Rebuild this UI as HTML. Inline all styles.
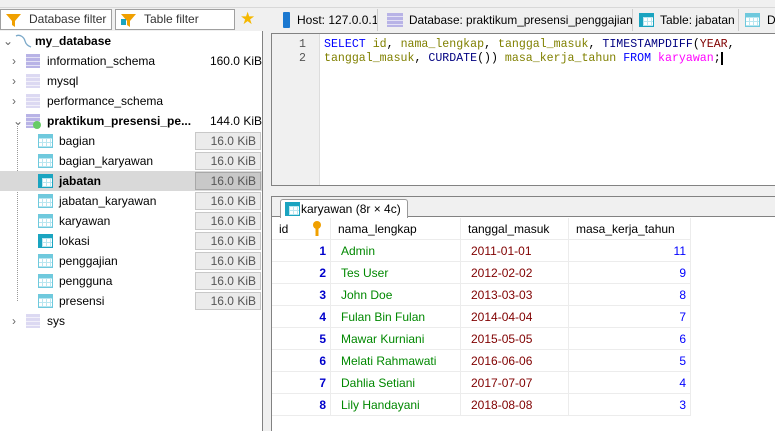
<!DOCTYPE html>
<html><head><meta charset="utf-8"><style>
*{margin:0;padding:0;box-sizing:border-box}
body{width:775px;height:431px;overflow:hidden;background:#f0f0f0;font-family:"Liberation Sans","DejaVu Sans",sans-serif;font-size:12px;color:#000;position:relative}
.abs{position:absolute}
.tb{left:0;top:0;width:775px;height:8px;background:#f0f0f0;border-bottom:1px solid #d8d8d8}
.filter{top:9px;height:21px;background:#fff;border:1px solid #a0a0a0;color:#333;line-height:19px;padding-left:28px;white-space:nowrap}
.tree{left:0;top:31px;width:263px;height:400px;background:#fff;border-right:1px solid #828282}
.row{position:absolute;left:0;width:262px;height:20px;line-height:20px;white-space:nowrap}
.row .t{position:absolute}
.size{position:absolute;right:0;text-align:right;width:70px}
.box{position:absolute;left:195px;width:66px;height:18px;top:1px;background:#ebebeb;border:1px solid #c8c8c8;text-align:right;padding-right:4px;line-height:16px;color:#555}
.dbic{position:absolute;width:14px;height:14px;top:3px;background:repeating-linear-gradient(#b8b3e6 0 3px,#e4e2f5 3px 4px)}
.tic{position:absolute;left:38px;top:3px;width:15px;height:14px;background:#fff;border:1px solid #6fc9dd;background-image:linear-gradient(#6fc9dd 0 3px,transparent 3px),repeating-linear-gradient(90deg,transparent 0 3px,#b8e6f0 3px 4px),repeating-linear-gradient(transparent 0 3px,#b8e6f0 3px 4px)}
.tic.dk{border-color:#1aa4c0;background-image:linear-gradient(#1aa4c0 0 3px,transparent 3px),linear-gradient(90deg,#1aa4c0 0 3px,transparent 3px),repeating-linear-gradient(90deg,transparent 0 3px,#b8e6f0 3px 4px),repeating-linear-gradient(transparent 0 3px,#b8e6f0 3px 4px)}
.arr{position:absolute;left:12px;color:#666;font-size:12px}
.tabs{left:271px;top:8px;width:504px;height:24px;background:#f0f0f0;overflow:hidden}
.tab{position:absolute;top:1px;height:22px;line-height:22px;background:#f0f0f0;border-right:1px solid #ccc;white-space:nowrap;overflow:hidden}
.editor{left:271px;top:33px;width:504px;height:153px;background:#fff;border:1px solid #828282;border-right:none}
.gut{position:absolute;left:0;top:0;width:48px;height:151px;background:#f0f0f0;border-right:1px solid #ddd}
.ln{position:absolute;width:34px;text-align:right;color:#555;font-family:"Liberation Mono",monospace;font-size:11.6px}
.code{position:absolute;left:52px;font-family:"Liberation Mono",monospace;font-size:11.6px;white-space:pre;line-height:14px}
.kw{color:#0000ff}.fn{color:#000080}.id{color:#808000}.tbl{color:#ff00ff}
.res{left:271px;top:196px;width:504px;height:235px;background:#fff;border:1px solid #828282;border-right:none;border-bottom:none}
</style></head><body>
<div class="abs tb"></div>
<div class="abs filter" style="left:0;width:112px">Database filter
<svg class="abs" style="left:4px;top:3px" width="18" height="16"><path d="M1 1h15l-6 7v6l-3-2V8z" fill="#f0a000"/></svg></div>
<div class="abs filter" style="left:115px;width:120px">Table filter
<svg class="abs" style="left:4px;top:3px" width="18" height="16"><path d="M1 1h15l-6 7v6l-3-2V8z" fill="#f0a000"/><rect x="1" y="6" width="5" height="6" fill="#1aa4c0"/></svg></div>
<div class="abs" style="left:240px;top:9px;font-size:17px;color:#f5b800">★</div>

<div class="abs tree">
 <div class="row" style="top:0"><span class="arr" style="left:3px">⌄</span><svg class="abs" style="left:14px;top:2px" width="18" height="16"><path d="M2 3c4-2 8 1 9 5s4 5 6 6" stroke="#7aa8c8" fill="none" stroke-width="1.3"/></svg><b class="t" style="left:35px">my_database</b></div>
 <div class="row" style="top:20px"><span class="arr">›</span><span class="dbic" style="left:26px"></span><span class="t" style="left:47px">information_schema</span><span class="size">160.0 KiB</span></div>
 <div class="row" style="top:40px"><span class="arr">›</span><span class="dbic" style="left:26px;opacity:.5"></span><span class="t" style="left:47px">mysql</span></div>
 <div class="row" style="top:60px"><span class="arr">›</span><span class="dbic" style="left:26px;opacity:.5"></span><span class="t" style="left:47px">performance_schema</span></div>
 <div class="row" style="top:80px"><span class="arr" style="left:13px">⌄</span><span class="dbic" style="left:26px"></span><span class="abs" style="left:33px;top:10px;width:8px;height:8px;border-radius:4px;background:#6c6"></span><b class="t" style="left:47px">praktikum_presensi_pe...</b><span class="size">144.0 KiB</span></div>
 <div class="abs" style="left:17px;top:92px;height:178px;border-left:1px dotted #999"></div>
 <div class="row" style="top:100px"><span class="tic"></span><span class="t" style="left:59px">bagian</span><span class="box">16.0 KiB</span></div>
 <div class="row" style="top:120px"><span class="tic"></span><span class="t" style="left:59px">bagian_karyawan</span><span class="box">16.0 KiB</span></div>
 <div class="row" style="top:140px;background:#d9d9d9"><span class="tic dk"></span><b class="t" style="left:59px">jabatan</b><span class="box" style="background:#c8c8c8;border-color:#a8a8a8">16.0 KiB</span></div>
 <div class="row" style="top:160px"><span class="tic"></span><span class="t" style="left:59px">jabatan_karyawan</span><span class="box">16.0 KiB</span></div>
 <div class="row" style="top:180px"><span class="tic"></span><span class="t" style="left:59px">karyawan</span><span class="box">16.0 KiB</span></div>
 <div class="row" style="top:200px"><span class="tic dk"></span><span class="t" style="left:59px">lokasi</span><span class="box">16.0 KiB</span></div>
 <div class="row" style="top:220px"><span class="tic"></span><span class="t" style="left:59px">penggajian</span><span class="box">16.0 KiB</span></div>
 <div class="row" style="top:240px"><span class="tic"></span><span class="t" style="left:59px">pengguna</span><span class="box">16.0 KiB</span></div>
 <div class="row" style="top:260px"><span class="tic"></span><span class="t" style="left:59px">presensi</span><span class="box">16.0 KiB</span></div>
 <div class="row" style="top:280px"><span class="arr">›</span><span class="dbic" style="left:26px;opacity:.5"></span><span class="t" style="left:47px">sys</span></div>
</div>

<div class="abs tabs">
 <div class="tab" style="left:4px;width:103px;padding-left:22px">Host: 127.0.0.1<span class="abs" style="left:8px;top:3px;width:7px;height:16px;background:#1b78d0;border-radius:1px"></span></div>
 <div class="tab" style="left:109px;width:253px;padding-left:29px;font-size:11.8px">Database: praktikum_presensi_penggajian<span class="dbic" style="left:7px;top:4px;width:16px"></span></div>
 <div class="tab" style="left:363px;width:105px;padding-left:26px">Table: jabatan<span class="tic dk" style="left:5px;top:4px"></span></div>
 <div class="tab" style="left:469px;width:40px;padding-left:27px;border:none">D<span class="tic" style="left:5px;top:4px"></span></div>
</div>

<div class="abs editor">
 <div class="gut"></div>
 <div class="ln" style="top:4px">1</div><div class="ln" style="top:18px">2</div>
 <div class="code" style="top:4px"><span class="kw">SELECT</span> <span class="id">id</span>, <span class="id">nama_lengkap</span>, <span class="id">tanggal_masuk</span>, <span class="fn">TIMESTAMPDIFF</span>(<span style="color:#800000">YEAR</span>,
<span class="id">tanggal_masuk</span>, <span class="fn">CURDATE</span>()) <span class="id">masa_kerja_tahun</span> <span class="kw">FROM</span> <span class="tbl">karyawan</span>;<span style="border-left:2px solid #000"></span></div>
</div>

<div class="abs res">
 <div class="abs" style="left:0;top:0;width:504px;height:20px;background:#f0f0f0;border-bottom:1px solid #828282"></div>
 <div class="abs" style="left:8px;top:2px;width:128px;height:19px;background:#fff;border:1px solid #999;border-bottom:none;border-radius:3px 3px 0 0;line-height:18px;padding-left:20px;font-size:12px;white-space:nowrap">karyawan (8r × 4c)<span class="tic dk" style="left:4px;top:2px"></span></div>
</div>
<div class="abs" style="left:272px;top:218px;font-size:12px">
 <div class="abs" style="left:0;top:0;width:418px;height:22px;line-height:22px;border-bottom:1px solid #ececec;white-space:nowrap">
  <span class="abs" style="left:7px">id</span>
  <svg class="abs" style="left:39px;top:3px" width="12" height="16"><circle cx="6" cy="4" r="4" fill="#f0a000"/><rect x="4.5" y="7" width="3" height="8" fill="#f0a000"/></svg>
  <span class="abs" style="left:66px">nama_lengkap</span>
  <span class="abs" style="left:196px">tanggal_masuk</span>
  <span class="abs" style="left:304px">masa_kerja_tahun</span>
 </div>
 <div class="abs" style="left:58px;top:0;height:198px;border-left:1px solid #ececec"></div>
 <div class="abs" style="left:188px;top:0;height:198px;border-left:1px solid #ececec"></div>
 <div class="abs" style="left:296px;top:0;height:198px;border-left:1px solid #ececec"></div>
 <div class="abs" style="left:418px;top:0;height:198px;border-left:1px solid #ececec"></div>
</div>
<div class="abs" style="left:272px;top:240px;width:418px;font-size:12px;line-height:22px;white-space:nowrap">
 <div style="height:22px;border-bottom:1px solid #ececec;position:relative"><b class="abs" style="left:0;width:54px;text-align:right;color:#00c">1</b><span class="abs" style="left:69px;color:#080">Admin</span><span class="abs" style="left:199px;color:#800000">2011-01-01</span><span class="abs" style="right:4px;color:#00f">11</span></div>
 <div style="height:22px;border-bottom:1px solid #ececec;position:relative"><b class="abs" style="left:0;width:54px;text-align:right;color:#00c">2</b><span class="abs" style="left:69px;color:#080">Tes User</span><span class="abs" style="left:199px;color:#800000">2012-02-02</span><span class="abs" style="right:4px;color:#00f">9</span></div>
 <div style="height:22px;border-bottom:1px solid #ececec;position:relative"><b class="abs" style="left:0;width:54px;text-align:right;color:#00c">3</b><span class="abs" style="left:69px;color:#080">John Doe</span><span class="abs" style="left:199px;color:#800000">2013-03-03</span><span class="abs" style="right:4px;color:#00f">8</span></div>
 <div style="height:22px;border-bottom:1px solid #ececec;position:relative"><b class="abs" style="left:0;width:54px;text-align:right;color:#00c">4</b><span class="abs" style="left:69px;color:#080">Fulan Bin Fulan</span><span class="abs" style="left:199px;color:#800000">2014-04-04</span><span class="abs" style="right:4px;color:#00f">7</span></div>
 <div style="height:22px;border-bottom:1px solid #ececec;position:relative"><b class="abs" style="left:0;width:54px;text-align:right;color:#00c">5</b><span class="abs" style="left:69px;color:#080">Mawar Kurniani</span><span class="abs" style="left:199px;color:#800000">2015-05-05</span><span class="abs" style="right:4px;color:#00f">6</span></div>
 <div style="height:22px;border-bottom:1px solid #ececec;position:relative"><b class="abs" style="left:0;width:54px;text-align:right;color:#00c">6</b><span class="abs" style="left:69px;color:#080">Melati Rahmawati</span><span class="abs" style="left:199px;color:#800000">2016-06-06</span><span class="abs" style="right:4px;color:#00f">5</span></div>
 <div style="height:22px;border-bottom:1px solid #ececec;position:relative"><b class="abs" style="left:0;width:54px;text-align:right;color:#00c">7</b><span class="abs" style="left:69px;color:#080">Dahlia Setiani</span><span class="abs" style="left:199px;color:#800000">2017-07-07</span><span class="abs" style="right:4px;color:#00f">4</span></div>
 <div style="height:22px;border-bottom:1px solid #ececec;position:relative"><b class="abs" style="left:0;width:54px;text-align:right;color:#00c">8</b><span class="abs" style="left:69px;color:#080">Lily Handayani</span><span class="abs" style="left:199px;color:#800000">2018-08-08</span><span class="abs" style="right:4px;color:#00f">3</span></div>
</div>
</body></html>
